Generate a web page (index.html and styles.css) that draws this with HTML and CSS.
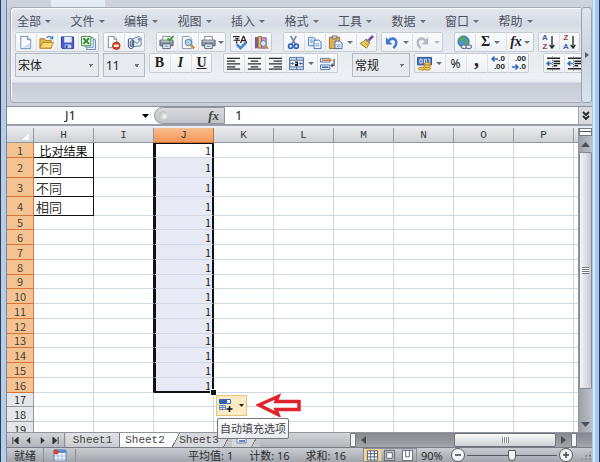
FILE: index.html
```html
<!DOCTYPE html>
<html lang="zh-CN">
<head>
<meta charset="utf-8">
<title>Sheet2</title>
<link rel="stylesheet" href="styles.css">
</head>
<body>
<svg width="0" height="0" class="defs" aria-hidden="true">
  <defs>
    <symbol id="page" viewBox="0 0 16 16"><path d="M3 1.5h7l3.500 3.500v9.500H3z" fill="#f7fbff" stroke="#6d8cae"/><path d="M10 1.500V5h3.500" fill="#d4e2f2" stroke="#6d8cae"/><path d="M5 13.500h8V8z" fill="#cfdff0"/></symbol>
    <symbol id="open" viewBox="0 0 16 16"><path d="M1 14V4h5l1 2h6v8z" fill="#e9b648" stroke="#a8782a"/><path d="M1 14l3-6h11.500l-3 6z" fill="#fbd977" stroke="#b5842c"/><path d="M8 3q3-3 5.500 0M14.500 1v3h-3" fill="none" stroke="#3f75a8" stroke-width="1.300"/></symbol>
    <symbol id="save" viewBox="0 0 16 16"><path d="M1.500 2h13v12.500h-12l-1-1z" fill="#4b5dcc" stroke="#303c96"/><path d="M4.500 2h8v6h-8z" fill="#e9effb"/><path d="M5 10h7v4H5z" fill="#c4cff2"/><path d="M6 11h2v3H6z" fill="#303c96"/></symbol>
    <symbol id="xls" viewBox="0 0 16 16"><path d="M8 5h7.500v10.500H6z" fill="#eaf1fa" stroke="#5b86b5"/><path d="M7 3h6v10H5z" fill="#fff" stroke="#5b86b5"/><path d="M.5 1.500h10v10H.5z" fill="#e1f1dd" stroke="#3c8740"/><path d="M2.500 3.500l6 6M8.500 3.500l-6 6" stroke="#358a3a" stroke-width="2"/></symbol>
    <symbol id="del" viewBox="0 0 16 16"><path d="M2.500 1.500h6l3 3v9h-9z" fill="#fff" stroke="#77879c"/><path d="M8.500 1.500v3h3" fill="#dae4ef" stroke="#77879c"/><circle cx="11" cy="11.500" r="4" fill="#dc4a2b" stroke="#b13218"/><path d="M8.500 11.500h5" stroke="#fff" stroke-width="2"/></symbol>
    <symbol id="mail" viewBox="0 0 16 16"><path d="M6 4l7-2.500 2 2v8l-9 1z" fill="#e8f0fa" stroke="#6584ad"/><path d="M6 6l5 3 4-5" fill="none" stroke="#6584ad"/><circle cx="13" cy="4.500" r="1.500" fill="#6d96d0"/><path d="M7 5v7.500q-2.500 4-5.500 0V5q2-3 4 0v6.500q-1 1.500-2 0V6" fill="none" stroke="#4f6789" stroke-width="1.200"/></symbol>
    <symbol id="print" viewBox="0 0 16 16"><path d="M4 5V1.500h8V5" fill="#fff" stroke="#7a8494"/><path d="M1 5.500h14v6H1z" fill="#8b95a3" stroke="#58616e"/><path d="M2 6.500h12" stroke="#d9dee4"/><path d="M4 9.500h8v5H4z" fill="#e9f3fc" stroke="#58616e"/><path d="M6 12h4" stroke="#4e7fc0"/></symbol>
    <symbol id="check" viewBox="0 0 16 16"><path d="M9 3.500l2.500 2.500 4-5" fill="none" stroke="#43a02f" stroke-width="2"/></symbol>
    <symbol id="preview" viewBox="0 0 16 16"><path d="M2.500 1.500h7l3 3v10h-10z" fill="#f7fbff" stroke="#7e92ab"/><circle cx="9" cy="8" r="3.500" fill="#a8d0f0" stroke="#5c7897"/><path d="M11.500 10.500l3.500 4" stroke="#d28a2e" stroke-width="2.500"/></symbol>
    <symbol id="spell" viewBox="0 0 16 16"><path d="M.5 2.500V1.500h6v1M2 3.500h3.500L4 5v3.500H3M.5 5.500h7" fill="none" stroke="#222" stroke-width="1.100"/><path d="M8 8.500l3-7h.5l3 7M9 6h4.500" fill="none" stroke="#222" stroke-width="1.200"/><path d="M4 10l4 4 6-6" fill="none" stroke="#4e86d6" stroke-width="3"/></symbol>
    <symbol id="book" viewBox="0 0 16 16"><path d="M1 2h3.500v12H1z" fill="#8356a8"/><path d="M4.500 1.500H8V14H4.500z" fill="#edbd4d" stroke="#a07825"/><path d="M8 3h5v11H8z" fill="#cf9fd0" stroke="#8356a8"/><circle cx="10" cy="9" r="3" fill="#d8ebfa" stroke="#5b7896"/><path d="M12 11.500l3 3" stroke="#d28a2e" stroke-width="2"/></symbol>
    <symbol id="cut" viewBox="0 0 16 16"><path d="M5 1l5 9M11 1L6 10" stroke="#6c84a8" stroke-width="1.700"/><circle cx="5" cy="12" r="2.200" fill="none" stroke="#2f62b5" stroke-width="1.800"/><circle cx="11" cy="12" r="2.200" fill="none" stroke="#2f62b5" stroke-width="1.800"/></symbol>
    <symbol id="copy" viewBox="0 0 16 16"><path d="M1.500 2.500h5l2.500 2v7H1.500z" fill="#d9e8fa" stroke="#5a82c0"/><path d="M7.500 5.500h5l2.500 2v7H7.500z" fill="#eef5fd" stroke="#4670b4"/><path d="M9 9.500h4M9 11.500h4M3 5.500h3M3 7.500h3" stroke="#6b97d6"/></symbol>
    <symbol id="paste" viewBox="0 0 16 16"><path d="M1.500 2.500h11v12h-11z" fill="#e8b04b" stroke="#9d6e23"/><path d="M4.500 1h5v3h-5z" fill="#d5d8dd" stroke="#6b6b6b"/><path d="M7.500 6.500h5l2.500 2v6H7.500z" fill="#e6effb" stroke="#4670b4"/><path d="M9 10.500h4M9 12.500h4" stroke="#6b97d6"/></symbol>
    <symbol id="brush" viewBox="0 0 16 16"><path d="M15 1l-5 5" stroke="#7350a5" stroke-width="3"/><path d="M7 4.500l4.500 4L8 14 1 9q4-1 6-4.500z" fill="#f0d363" stroke="#a98424"/><path d="M3 10l4 3M5.500 8l4 3" stroke="#b08c2a"/><path d="M7 4.500l4.500 4" stroke="#888" stroke-width="2"/></symbol>
    <symbol id="undo" viewBox="0 0 16 16"><path d="M4 7q4-5 8-2 3 4-2 9" fill="none" stroke="#3f7bd0" stroke-width="2.600"/><path d="M2 2v8h7z" fill="#3f7bd0"/></symbol>
    <symbol id="redo" viewBox="0 0 16 16"><path d="M12 7q-4-5-8-2-3 4 2 9" fill="none" stroke="#b5bbc6" stroke-width="2.600"/><path d="M14 2v8H7z" fill="#b5bbc6"/></symbol>
    <symbol id="globe" viewBox="0 0 16 16"><circle cx="7" cy="7" r="6" fill="#4f93d1" stroke="#2f6899"/><path d="M3 3q4-3 6 0l-2 3-3 1-2-1zM8 7l4-2q1 4-3 6z" fill="#57ab4b"/><ellipse cx="7.500" cy="12.500" rx="3" ry="2" fill="#eef2f6" stroke="#66788e" stroke-width="1.300"/><ellipse cx="12.500" cy="12.500" rx="3" ry="2" fill="#eef2f6" stroke="#66788e" stroke-width="1.300"/></symbol>
    <symbol id="down" viewBox="0 0 6 16"><path d="M3 1v13M.5 10.500L3 14l2.500-3.500" fill="none" stroke="#222" stroke-width="1.400"/></symbol>
    <symbol id="left" viewBox="0 0 16 16"><path d="M1 2.500h14M1 5.500h9M1 8.500h14M1 11.500h9M1 14h14" stroke="#2b2b2b" stroke-width="1.300"/></symbol>
    <symbol id="center" viewBox="0 0 16 16"><path d="M1 2.500h14M4 5.500h8M1 8.500h14M4 11.500h8M1 14h14" stroke="#2b2b2b" stroke-width="1.300"/></symbol>
    <symbol id="right" viewBox="0 0 16 16"><path d="M1 2.500h14M6 5.500h9M1 8.500h14M6 11.500h9M1 14h14" stroke="#2b2b2b" stroke-width="1.300"/></symbol>
    <symbol id="merge" viewBox="0 0 16 16"><path d="M.5 1.500h15v13H.5z" fill="#c4d7ee" stroke="#53749f"/><path d="M8 1.500v3M8 11.500v3" stroke="#53749f"/><path d="M1 4.500h14v7H1z" fill="#f5f9fe" stroke="#53749f"/><path d="M1.500 8h3M11.500 8h3M3.500 6.500L5 8 3.500 9.500M12.500 6.500L11 8l1.500 1.500" fill="none" stroke="#2b58a0"/><path d="M6.500 6.500h2.500V10H7q-1-1.500 2-1.500" fill="none" stroke="#111" stroke-width="1.200"/></symbol>
    <symbol id="wrap" viewBox="0 0 16 16"><path d="M.5 2.500h10v4H.5zM.5 9.500h10v5H.5z" fill="#e6eefa" stroke="#5876a5"/><path d="M2 4.500h11" stroke="#d97b2a" stroke-width="1.500"/><path d="M2 12h7" stroke="#3c6bb0" stroke-width="1.500"/><path d="M15 3v7h-3M13.500 8L12 10l1.500 1.500" fill="none" stroke="#42536d" stroke-width="1.200"/></symbol>
    <symbol id="money" viewBox="0 0 16 16"><path d="M.5 1.500h15v8H.5z" fill="#4a73bd" stroke="#2b4c8c"/><path d="M3 3.500h2.500v4H3zM8 3.500h2v4H8zM12 3.500h1.500v4" fill="none" stroke="#d8e6fa"/><ellipse cx="11" cy="8.500" rx="3.500" ry="1.500" fill="#f6cf5a" stroke="#b28320"/><ellipse cx="11" cy="11" rx="3.500" ry="1.500" fill="#f6cf5a" stroke="#b28320"/><ellipse cx="5" cy="13.500" rx="3.500" ry="1.500" fill="#f6cf5a" stroke="#b28320"/><ellipse cx="11" cy="13.500" rx="3.500" ry="1.500" fill="#f6cf5a" stroke="#b28320"/></symbol>
    <symbol id="arl" viewBox="0 0 7 6"><path d="M1 3h6M3.500.5L1 3l2.500 2.500" fill="none" stroke="#2f6bc5" stroke-width="1.500"/></symbol>
    <symbol id="arr" viewBox="0 0 7 6"><path d="M0 3h6M3.500.5L6 3 3.500 5.500" fill="none" stroke="#2f6bc5" stroke-width="1.500"/></symbol>
    <symbol id="indent" viewBox="0 0 16 16"><path d="M1 2.500h14M8 5.500h7M8 8h7M8 10.500h4M1 13.500h14" stroke="#222" stroke-width="1.600"/><path d="M7 .5v15" stroke="#555" stroke-dasharray="1 1"/><path d="M1 8h5M3.500 5.500L1 8l2.500 2.500" fill="none" stroke="#2f6bc5" stroke-width="1.500"/></symbol>
  </defs>
</svg>
<main class="window">
  <div class="tabstrip"><span></span></div>
  <section class="ribbon">
    <div class="panel">
      <nav class="menu">
        <button>全部</button><button>文件</button><button>编辑</button><button>视图</button><button>插入</button><button>格式</button><button>工具</button><button>数据</button><button>窗口</button><button>帮助</button>
      </nav>
      <div class="bar">
        <div class="group"><button aria-label="新建"><svg><use href="#page"/></svg></button><button aria-label="打开"><svg><use href="#open"/></svg></button><button aria-label="保存"><svg><use href="#save"/></svg></button><button aria-label="另存为"><svg><use href="#xls"/></svg></button></div>
        <div class="group"><button aria-label="权限"><svg><use href="#del"/></svg></button><button aria-label="邮件"><svg><use href="#mail"/></svg></button></div>
        <div class="group apart"><button aria-label="快速打印"><svg><use href="#print"/><use href="#check"/></svg></button><button aria-label="打印预览"><svg><use href="#preview"/></svg></button><button class="drop tight" aria-label="打印"><svg><use href="#print"/></svg></button></div>
        <div class="group"><button aria-label="拼写检查"><svg><use href="#spell"/></svg></button><button aria-label="信息检索"><svg><use href="#book"/></svg></button></div>
        <div class="group apart"><button aria-label="剪切"><svg><use href="#cut"/></svg></button><button aria-label="复制"><svg><use href="#copy"/></svg></button><button class="drop" aria-label="粘贴"><svg><use href="#paste"/></svg></button><button aria-label="格式刷"><svg><use href="#brush"/></svg></button></div>
        <div class="group"><button class="drop" aria-label="撤消"><svg><use href="#undo"/></svg></button><button class="drop off" aria-label="恢复"><svg><use href="#redo"/></svg></button></div>
        <div class="group apart"><button aria-label="超链接"><svg><use href="#globe"/></svg></button><button class="drop glyph">Σ</button><button class="drop tight glyph"><i>fx</i></button></div>
        <div class="group"><button class="sort"><span><b class="blue">A</b><b class="red">Z</b></span><svg><use href="#down"/></svg></button><button class="sort"><span><b class="red">Z</b><b class="blue">A</b></span><svg><use href="#down"/></svg></button></div>
      </div>
      <div class="bar">
        <select class="font" aria-label="字体"><option>宋体</option></select>
        <select class="size" aria-label="字号"><option>11</option></select>
        <div class="group"><button class="glyph">B</button><button class="glyph"><i>I</i></button><button class="glyph"><u>U</u></button></div>
        <div class="group apart"><button aria-label="左对齐"><svg><use href="#left"/></svg></button><button aria-label="居中"><svg><use href="#center"/></svg></button><button aria-label="右对齐"><svg><use href="#right"/></svg></button><button class="drop" aria-label="合并"><svg><use href="#merge"/></svg></button><button aria-label="换行"><svg><use href="#wrap"/></svg></button></div>
        <select class="format far" aria-label="数字格式"><option>常规</option></select>
        <div class="group"><button class="drop" aria-label="货币"><svg><use href="#money"/></svg></button><button class="percent">%</button><button class="glyph comma">,</button><button class="digits"><span><svg><use href="#arl"/></svg>.0</span><span>.00</span></button><button class="digits"><span>.00</span><span><svg><use href="#arr"/></svg>.0</span></button></div>
        <div class="group far"><button aria-label="减少缩进"><svg><use href="#indent"/></svg></button><button aria-label="增加缩进"><svg><use href="#indent"/></svg></button></div>
      </div>
    </div>
    <button class="more" aria-label="更多"><svg viewBox="0 0 4 6"><path d="M0 0l4 3-4 3z" fill="#555d68"/></svg></button>
  </section>
  <section class="formula">
    <label class="name"><input value="J1" aria-label="名称框"><svg viewBox="0 0 7 4"><path d="M0 0h7L3.500 4z"/></svg></label>
    <div class="pill"><span class="knob"></span><button><i>fx</i></button></div>
    <input class="entry" value="1" aria-label="编辑栏">
    <button class="expand" aria-label="展开编辑栏"><svg viewBox="0 0 8 10"><path d="M1 1l3 3 3-3M1 5l3 3 3-3" fill="none" stroke="#222" stroke-width="1.800"/></svg></button>
  </section>
  <section class="work">
    <div class="sheet">
      <table>
        <thead><tr><th class="corner"><svg viewBox="0 0 7 7"><path d="M7 0v7H0z" fill="#fff"/></svg></th><th>H</th><th>I</th><th class="sel">J</th><th>K</th><th>L</th><th>M</th><th>N</th><th>O</th><th>P</th><th></th></tr></thead>
        <tbody>
          <tr><th>1</th><td class="box mid">比对结果</td><td></td><td>1</td><td></td><td></td><td></td><td></td><td></td><td></td><td></td></tr>
          <tr class="tall"><th>2</th><td class="box">不同</td><td></td><td>1</td><td></td><td></td><td></td><td></td><td></td><td></td><td></td></tr>
          <tr class="tall"><th>3</th><td class="box">不同</td><td></td><td>1</td><td></td><td></td><td></td><td></td><td></td><td></td><td></td></tr>
          <tr class="tall"><th>4</th><td class="box">相同</td><td></td><td>1</td><td></td><td></td><td></td><td></td><td></td><td></td><td></td></tr>
          <tr><th>5</th><td></td><td></td><td>1</td><td></td><td></td><td></td><td></td><td></td><td></td><td></td></tr>
          <tr><th>6</th><td></td><td></td><td>1</td><td></td><td></td><td></td><td></td><td></td><td></td><td></td></tr>
          <tr><th>7</th><td></td><td></td><td>1</td><td></td><td></td><td></td><td></td><td></td><td></td><td></td></tr>
          <tr><th>8</th><td></td><td></td><td>1</td><td></td><td></td><td></td><td></td><td></td><td></td><td></td></tr>
          <tr><th>9</th><td></td><td></td><td>1</td><td></td><td></td><td></td><td></td><td></td><td></td><td></td></tr>
          <tr><th>10</th><td></td><td></td><td>1</td><td></td><td></td><td></td><td></td><td></td><td></td><td></td></tr>
          <tr><th>11</th><td></td><td></td><td>1</td><td></td><td></td><td></td><td></td><td></td><td></td><td></td></tr>
          <tr><th>12</th><td></td><td></td><td>1</td><td></td><td></td><td></td><td></td><td></td><td></td><td></td></tr>
          <tr><th>13</th><td></td><td></td><td>1</td><td></td><td></td><td></td><td></td><td></td><td></td><td></td></tr>
          <tr><th>14</th><td></td><td></td><td>1</td><td></td><td></td><td></td><td></td><td></td><td></td><td></td></tr>
          <tr><th>15</th><td></td><td></td><td>1</td><td></td><td></td><td></td><td></td><td></td><td></td><td></td></tr>
          <tr class="last"><th>16</th><td></td><td></td><td>1<span class="handle"></span></td><td></td><td></td><td></td><td></td><td></td><td></td><td></td></tr>
          <tr class="plain"><th>17</th><td></td><td></td><td></td><td></td><td></td><td></td><td></td><td></td><td></td><td></td></tr>
          <tr class="plain"><th>18</th><td></td><td></td><td></td><td></td><td></td><td></td><td></td><td></td><td></td><td></td></tr>
          <tr class="plain"><th>19</th><td></td><td></td><td></td><td></td><td></td><td></td><td></td><td></td><td></td><td></td></tr>
        </tbody>
      </table>
    </div>
    <div class="vscroll">
      <span class="split"></span>
      <button aria-label="向上"><svg viewBox="0 0 9 5"><path d="M0 5h9L4.500 0z" fill="#4a4f5e"/></svg></button>
      <span class="thumb"></span>
      <button class="low" aria-label="向下"><svg viewBox="0 0 9 5"><path d="M0 0h9L4.500 5z" fill="#4a4f5e"/></svg></button>
    </div>
    <div class="fill">
      <button class="smart" aria-label="自动填充选项"><svg class="cells" viewBox="0 0 14 13"><path d="M.5.5h7v4h-7z" fill="#2f62b5" stroke="#2f62b5"/><path d="M7.500.5h4v4h-4z" fill="#fff" stroke="#2f62b5"/><path d="M.5 6.500h6v4h-6zM3.500 6.500v4M.5 8.500h6" fill="#fff" stroke="#5b83c4"/><path d="M10.500 7v6M7.500 10h6" stroke="#111" stroke-width="1.500"/></svg><svg class="tri" viewBox="0 0 5 3"><path d="M0 0h5L2.500 3z" fill="#222"/></svg></button>
      <svg class="pointer" viewBox="0 0 45 24"><path d="M3 12L22 3.500 20 8.500H43V16.500H20L22 21.500z" fill="#fff" stroke="#e1242b" stroke-width="3.500"/></svg>
      <div class="tip" role="tooltip">自动填充选项</div>
    </div>
  </section>
  <section class="sheets">
    <div class="steps">
      <button aria-label="第一张"><svg viewBox="0 0 8 8"><path d="M1 0v8M7 0v8L2.500 4z" fill="#333" stroke="#333" stroke-width="1"/></svg></button>
      <button aria-label="上一张"><svg viewBox="0 0 8 8"><path d="M6 0v8L1.500 4z" fill="#333"/></svg></button>
      <button aria-label="下一张"><svg viewBox="0 0 8 8"><path d="M2 0v8l4.500-4z" fill="#333"/></svg></button>
      <button aria-label="最后一张"><svg viewBox="0 0 8 8"><path d="M7 0v8M1 0v8l4.500-4z" fill="#333" stroke="#333" stroke-width="1"/></svg></button>
    </div>
    <div class="tabs">
      <button>Sheet1</button><button class="on">Sheet2</button><button class="slant">Sheet3</button><button class="new" aria-label="插入工作表"><svg viewBox="0 0 12 8"><path d="M1 2h9v5H1z" fill="#fff" stroke="#6785ad"/><path d="M3 5h6" stroke="#6785ad" stroke-width="2"/></svg></button>
    </div>
    <div class="hscroll">
      <span class="split"></span>
      <button aria-label="向左"><svg viewBox="0 0 5 8"><path d="M5 0v8L0 4z" fill="#4a4d54"/></svg></button>
      <span class="track"></span>
      <span class="thumb"></span>
      <button aria-label="向右"><svg viewBox="0 0 5 8"><path d="M0 0v8l5-4z" fill="#4a4d54"/></svg></button>
      <span class="split"></span>
    </div>
  </section>
  <footer class="status">
    <span class="ready">就绪</span>
    <button class="macro" aria-label="录制宏"><svg viewBox="0 0 14 12"><path d="M1 1h12v11H1z" fill="#fff" stroke="#5078b5"/><path d="M1 1h12v3H1z" fill="#5d8ace"/><path d="M1 7h12M1 10h12M5 4v8M9 4v8" stroke="#9db8dd"/><circle cx="3" cy="3" r="2.500" fill="#d9432a"/></svg></button>
    <div class="stats"><span>平均值: 1</span><span>计数: 16</span><span>求和: 16</span></div>
    <div class="views">
      <button class="on" aria-label="普通"><svg viewBox="0 0 14 12"><path d="M1.500 1.500h11v10h-11zM1.500 4.500h11M1.500 8h11M5 1.500v10M9 1.500v10" fill="#fff" stroke="#4b5770"/></svg></button>
      <button aria-label="页面布局"><svg viewBox="0 0 14 12"><path d="M1.500 1h11v11h-11z" fill="#b9bdc4" stroke="#5b626d"/><path d="M4 3.500h6v6H4z" fill="#fff" stroke="#5b626d"/></svg></button>
      <button aria-label="分页预览"><svg viewBox="0 0 14 12"><path d="M1.500 1h11v11h-11z" fill="#fff" stroke="#5b626d"/><path d="M5 1v7M9 1v7M5 8h4" fill="none" stroke="#5b626d"/></svg></button>
    </div>
    <label class="zoom"><span>90%</span><svg class="round" viewBox="0 0 14 14"><circle cx="7" cy="7" r="6.500" fill="#f3f4f5" stroke="#55585e"/><path d="M4 7h6" stroke="#444" stroke-width="1.500"/></svg><input type="range" min="10" max="190" value="100" aria-label="缩放"><svg class="round" viewBox="0 0 14 14"><circle cx="7" cy="7" r="6.500" fill="#f3f4f5" stroke="#55585e"/><path d="M4 7h6M7 4v6" stroke="#444" stroke-width="1.500"/></svg></label>
    <span class="grip"></span>
  </footer>
</main>
</body>
</html>
```

FILE: styles.css
```css
* { box-sizing: border-box; }
body { margin: 0; font: 12px/15px "Noto Sans", "Noto Sans CJK SC", sans-serif; color: #222; }
button, input, select { font: inherit; color: inherit; margin: 0; padding: 0; border: 0; border-radius: 0; background: none; }
svg { display: block; }
.defs { position: absolute; }

.window {
  display: flex; flex-direction: column; height: 100vh; overflow: hidden;
  background: #c9ced8;
  border-style: solid; border-width: 0 8px 0 7px;
  border-image: linear-gradient(to right, #2f3d50 0 1px, #b4cdea 1px 6px, #7b8594 6px 7px, #a9c8ee 7px calc(100% - 7px), #dcecff calc(100% - 7px) calc(100% - 5px), #a3c8f3 calc(100% - 5px) calc(100% - 1px), #2b3848 calc(100% - 1px)) 0 8 0 7;
}

/* Ribbon */
.tabstrip { flex: none; height: 7px; padding-left: 44px; background: #cdd2dc; }
.tabstrip span { display: block; width: 54px; height: 7px; background: #e3ebf4; }
.ribbon { flex: none; display: flex; height: 96px; margin-left: 3px; }
.panel {
  flex: 1; min-width: 0; overflow: hidden; padding: 5px 0 0 4px;
  border: 1px solid #a5abb6; border-right: 0; border-radius: 4px 0 0 4px;
  box-shadow: inset 1px 1px #f6f8fb;
  background: linear-gradient(#e4e8ef 0, #d5dae4 17px, #e2e7ed 24px, #edf0f4 70px, #e6eaef 74px, #c6cbd7 75px, #d3d7e0 94px);
}
.menu { display: grid; grid-template-columns: repeat(10, 1fr); margin: 0 31px 3px 0; }
.menu button { display: flex; align-items: center; gap: 4px; height: 16px; padding-left: 2px; color: #4c5260; }
.menu button::after, .drop::after { content: ""; border: 3px solid transparent; border-top-color: #6a6f7a; border-bottom: 0; }
.bar { display: flex; gap: 4px; width: max-content; margin-bottom: 1px; }
.group {
  display: flex; height: 20px; border-radius: 2px;
  background: linear-gradient(#fafbfc, #edf0f4);
  box-shadow: inset 0 0 0 1px #c6cbd4;
}
.group button { width: 21px; display: flex; align-items: center; justify-content: center; box-shadow: inset 1px 0 #dde0e6; }
.group button:first-child { box-shadow: none; }
.group svg { width: 15px; height: 15px; }
.group .drop { width: 31px; gap: 4px; }
.group .tight { width: 28px; gap: 2px; }
.off::after { border-top-color: #b5bbc6; }
.apart { margin-left: 7px; }
.far { margin-left: 10px; }
.group .glyph { font: bold 14px/16px "Liberation Serif", serif; }
.group .comma { font-size: 20px; line-height: 10px; padding-bottom: 8px; }
.percent { font-size: 12px; }
.group .sort { gap: 1px; }
.sort span { display: grid; grid-template-rows: 9px 9px; font: bold 8px/9px "Liberation Sans", sans-serif; }
.group .sort svg { width: 6px; height: 15px; }
.blue { color: #3b5fa5; }
.red { color: #a83a3a; }
.group .digits { flex-direction: column; align-items: flex-end; padding-right: 3px; font: bold 8px/8px "Liberation Sans", sans-serif; }
.digits span { display: flex; align-items: center; }
.group .digits svg { width: 7px; height: 6px; }
.bar select {
  appearance: none; height: 24px; padding: 0 2px; border: 1px solid #b4bac3;
  background: linear-gradient(135deg, #707580 50%, transparent 50%) no-repeat right 4px top 10px / 3px 3px, linear-gradient(225deg, #707580 50%, transparent 50%) no-repeat right 7px top 10px / 3px 3px, #e7eaee;
}
.font { width: 84px; }
.size { width: 42px; }
.format { width: 58px; }
.more {
  flex: none; width: 11px; display: flex; align-items: center; justify-content: center;
  border: 1px solid #98a3b0; border-radius: 3px;
  background: linear-gradient(#dfe4eb, #cbd5df 50%, #d6e6ee);
}
.more svg { width: 4px; height: 6px; }

/* Formula bar */
.formula { flex: none; display: flex; height: 20px; margin-top: 3px; border-top: 1px solid #8b919c; border-bottom: 2px solid #9a9fa9; background: #fff; }
.name { flex: none; display: flex; align-items: center; width: 147px; padding-right: 5px; }
.name input { flex: 1; min-width: 0; padding-right: 8px; text-align: center; font-size: 13px; }
.name svg { width: 7px; height: 4px; }
.pill { flex: none; display: flex; align-items: center; justify-content: space-between; width: 71px; padding: 0 5px 0 4px; border: 1px solid #8f949d; border-radius: 9px 0 0 9px; background: linear-gradient(#d9dbdf, #bfc2c8); }
.knob { width: 9px; height: 9px; border-radius: 50%; background: radial-gradient(circle at 60% 60%, #f6f6f6, #a3a6ab); }
.pill button { font: bold 13px/15px "Liberation Serif", serif; color: #444; }
.entry { flex: 1; min-width: 0; padding-left: 10px; font-size: 13px; }
.expand { flex: none; width: 14px; display: flex; align-items: center; justify-content: center; background: #d9dbdf; border-left: 1px solid #a0a4ac; }
.expand svg { width: 8px; height: 10px; }

/* Grid */
.work { position: relative; flex: 1; min-height: 0; display: flex; padding-top: 2px; background: #e9ecf2; }
.sheet { flex: 1; min-width: 0; overflow: hidden; background: #fff; }
table { table-layout: fixed; width: 627px; border-collapse: separate; border-spacing: 0; }
th, td { width: 60px; height: 15px; padding: 0; border: 0 solid #d0d7e5; border-width: 0 1px 1px 0; font: 11px/13px "Noto Sans CJK SC", sans-serif; }
tbody tr:nth-child(4n+5) > * { height: 14px; }
tbody .tall > * { height: 19px; }
tbody .tall:nth-child(2) > * { height: 20px; }
tbody tr.last > * { line-height: 12px; }
th:first-child { width: 27px; }
thead th { height: 15px; font-family: "Liberation Mono", monospace; color: #2f3b3b; background: linear-gradient(#e9eaec, #cfd2d6); border-color: #9297a0; }
thead .sel { background: linear-gradient(#f9bd8f, #f3965a); border-color: #c9713a; }
.corner svg { width: 7px; height: 7px; margin: 3px 4px 0 auto; }
tbody th { color: #4a4433; background: #f4c391; border-color: #d5763f; }
tbody .plain th { background: #e4e6e9; border-color: #9297a0; color: #333; }
td:nth-child(3) { border-right-color: #111; }
td:nth-child(4) { text-align: right; padding-right: 1px; background: #e7e9f5; border-left: 2px solid #111; border-right: 2px solid #111; }
tr:first-child td:nth-child(4) { background: #fff; border-top: 1px solid #111; }
.last td:nth-child(4) { position: relative; border-bottom: 2px solid #111; }
.plain td:nth-child(3) { border-right-color: #d0d7e5; }
.plain td:nth-child(4) { background: none; border-left: 0; border-right: 1px solid #d0d7e5; }
td.box { border-color: #111; font-size: 13px; padding-left: 2px; color: #333; }
td.mid { font-size: 12px; text-align: center; padding: 0; color: #111; }
.handle { position: absolute; right: -4px; bottom: -4px; width: 5px; height: 5px; background: #111; outline: 1px solid #fff; }

/* Fill-options menu, floating over the grid and the sheet tabs */
.fill { position: absolute; left: 209px; bottom: -7px; display: grid; grid-template-columns: 31px 45px; column-gap: 9px; align-items: center; z-index: 1; }
.smart { display: flex; align-items: center; justify-content: center; gap: 6px; height: 21px; border: 1px solid #eac27b; background: #fdebc4; }
.cells { width: 14px; height: 13px; }
.tri { width: 5px; height: 3px; }
.pointer { width: 45px; height: 24px; }
.tip { grid-column: 1 / 3; justify-self: start; margin: 1px 0 0 1px; padding: 2px 2px; border: 1px solid #777; border-radius: 2px; background: linear-gradient(#fff, #e8eaf2); font-size: 11px; line-height: 15px; white-space: nowrap; color: #444; }

/* Scrollbars */
.vscroll { flex: none; display: flex; flex-direction: column; width: 14px; border-left: 1px solid #8f949d; background: linear-gradient(to right, #9da1aa, #bcc0c9); }
.vscroll .split { height: 8px; border: 1px solid #777c85; background: linear-gradient(#fff 2px, #555 2px 3px, #fff 3px); }
.vscroll button { flex: none; height: 16px; display: flex; align-items: center; justify-content: center; }
.vscroll svg { width: 9px; height: 5px; }
.vscroll .thumb { flex: 1; margin-bottom: 27px; border: 1px solid #858a94; border-radius: 1px; background: repeating-linear-gradient(#777 0 1px, #fff 1px 2px) center / 7px 7px no-repeat, linear-gradient(to right, #f6f6f8, #c5c8d0); }

.sheets { flex: none; display: flex; height: 15px; background: linear-gradient(#d2d4d8, #b3b6bc); border-top: 1px solid #8f949d; }
.steps { flex: none; display: flex; align-items: center; justify-content: space-between; width: 58px; padding: 0 5px; border-right: 1px solid #8f949d; }
.steps svg { width: 7px; height: 7px; }
.tabs { flex: 1; min-width: 0; display: flex; padding-left: 1px; }
.tabs button { width: 54px; font: 11px/13px "Liberation Mono", monospace; color: #444; border-right: 1px solid #777c85; background: linear-gradient(#e2e3e6, #c9cbd0); }
.tabs .on { width: 50px; background: #fff; border-right: 0; }
.tabs .slant { width: 62px; padding-right: 4px; border-right: 0; background: linear-gradient(118deg, #fff 8px, #777c85 8px 9px, #d6d8dc 9px calc(100% - 8px), #777c85 calc(100% - 8px) calc(100% - 7px), #c4c7cc calc(100% - 7px)); }
.tabs .new { width: 28px; padding-left: 4px; border-right: 0; background: linear-gradient(118deg, #d6d8dc calc(100% - 8px), #777c85 calc(100% - 8px) calc(100% - 7px), #c4c7cc calc(100% - 7px)); }
.tabs svg { width: 12px; height: 8px; }
.hscroll { flex: none; display: flex; width: 242px; padding-right: 15px; background: linear-gradient(#85888e, #a3a6ab); }
.hscroll .split { width: 6px; border: 1px solid #777c85; background: #f3f4f5; }
.hscroll button { width: 15px; display: flex; align-items: center; justify-content: center; }
.hscroll svg { width: 5px; height: 8px; }
.track { flex: 1; }
.hscroll .thumb { width: 102px; border: 1px solid #70747b; border-radius: 2px; background: repeating-linear-gradient(to right, #888 0 1px, #fff 1px 2px) center / 7px 6px no-repeat, linear-gradient(#fafafa, #cfd1d5); }

/* Status bar */
.status { flex: none; display: flex; align-items: center; height: 15px; border-top: 1px solid #777c85; background: linear-gradient(#c9ccd1, #a1a5ac); color: #2b2b2b; font-size: 11px; }
.ready { width: 37px; padding-left: 7px; border-right: 1px solid #8a8e96; }
.macro { width: 32px; padding-left: 9px; border-right: 1px solid #8a8e96; }
.macro svg { width: 14px; height: 12px; }
.stats { flex: 1; display: flex; justify-content: flex-end; gap: 16px; padding-right: 17px; white-space: nowrap; }
.views { flex: none; display: flex; width: 54px; border: 1px solid #8a8e96; }
.views button { flex: 1; padding: 0 2px; }
.views .on { background: #f8d58c; }
.views svg { width: 13px; height: 12px; }
.zoom { flex: none; display: flex; align-items: center; gap: 2px; padding-left: 4px; }
.zoom span { width: 28px; }
.round { width: 14px; height: 14px; }
.zoom input { appearance: none; width: 90px; height: 13px; background: linear-gradient(#55585e, #55585e) center / 100% 1px no-repeat; }
.zoom input::-webkit-slider-thumb { appearance: none; width: 8px; height: 11px; border: 1px solid #555; border-radius: 1px 1px 4px 4px; background: #f4f4f4; }
.grip { flex: none; width: 19px; height: 9px; background: radial-gradient(#777 1px, transparent 1px) right / 4px 4px; clip-path: polygon(100% 0, 100% 100%, 40% 100%); }
```
